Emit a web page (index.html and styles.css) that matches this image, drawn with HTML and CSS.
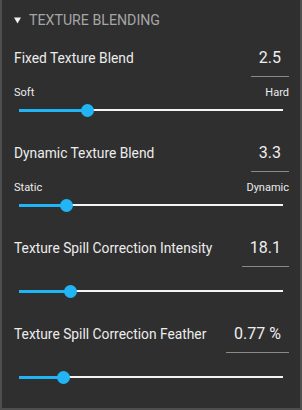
FILE: index.html
```html
<!DOCTYPE html>
<html>
<head>
<meta charset="utf-8">
<link rel="stylesheet" href="styles.css">
</head>
<body>
<div class="panel">
  <div class="header">
    <svg class="caret" width="7" height="7" viewBox="0 0 7 7"><polygon points="0,0.5 7,0.5 3.5,6.5" fill="#f2f2f2"/></svg>
    <span class="title">TEXTURE BLENDING</span>
  </div>

  <div class="section">
    <div class="row">
      <span class="label">Fixed Texture Blend</span>
      <span class="value">2.5</span>
    </div>
    <div class="captions"><span>Soft</span><span>Hard</span></div>
    <div class="slider after-captions"><div class="fill" style="width:26.1%"></div><div class="knob" style="left:26.1%"></div></div>
  </div>

  <div class="section">
    <div class="row">
      <span class="label">Dynamic Texture Blend</span>
      <span class="value">3.3</span>
    </div>
    <div class="captions"><span>Static</span><span>Dynamic</span></div>
    <div class="slider after-captions"><div class="fill" style="width:18%"></div><div class="knob" style="left:18%"></div></div>
  </div>

  <div class="section">
    <div class="row">
      <span class="label">Texture Spill Correction Intensity</span>
      <span class="value">18.1</span>
    </div>
    <div class="slider"><div class="fill" style="width:19.6%"></div><div class="knob" style="left:19.6%"></div></div>
  </div>

  <div class="section">
    <div class="row">
      <span class="label">Texture Spill Correction Feather</span>
      <span class="value">0.77 %</span>
    </div>
    <div class="slider"><div class="fill" style="width:17%"></div><div class="knob" style="left:17%"></div></div>
  </div>
</div>
</body>
</html>
```
FILE: styles.css
```css
html, body {
  margin: 0;
  padding: 0;
  background: #2f2f2f;
}
.panel {
  box-sizing: border-box;
  width: 302px;
  height: 410px;
  background: #2f2f2f;
  border-left: 2px solid #4e4e4e;
  border-right: 2px solid #4e4e4e;
  border-bottom: 2px solid #4e4e4e;
  font-family: Roboto, "Noto Sans", sans-serif;
  color: #ececec;
  padding: 0 11px;
  overflow: hidden;
}
.header {
  display: flex;
  align-items: center;
  padding-top: 9px;
  height: 20px;
  margin-bottom: 17px;
}
.caret {
  margin-left: 1px;
  margin-right: 8px;
  margin-top: 2px;
}
.title {
  font-size: 14.2px;
  line-height: 20px;
  color: #a6a6a6;
  padding-top: 1px;
}
.section + .section {
  margin-top: 21px;
}
.row {
  display: flex;
  justify-content: space-between;
  align-items: flex-end;
}
.label {
  font-size: 13.8px;
  line-height: 24px;
  padding-bottom: 7px;
  padding-left: 1px;
}
.value {
  font-size: 16px;
  line-height: 24px;
  padding: 0 8px 6px 8px;
  border-bottom: 1px solid #8a8a8a;
  color: #eeeeee;
}
.captions {
  display: flex;
  justify-content: space-between;
  font-size: 11px;
  line-height: 13px;
  margin-top: 9px;
  padding-left: 1px;
}
.slider {
  position: relative;
  height: 20px;
  margin: 14px 6px 0 6px;
}
.slider.after-captions {
  margin-top: 1px;
}
.slider::before {
  content: "";
  position: absolute;
  left: 0;
  right: 0;
  top: 9px;
  height: 2px;
  background: #f4f4f4;
}
.fill {
  position: absolute;
  left: 0;
  top: 8.5px;
  height: 3px;
  background: #22b5f5;
}
.knob {
  position: absolute;
  top: 3.5px;
  width: 13px;
  height: 13px;
  margin-left: -6.5px;
  border-radius: 50%;
  background: #22b5f5;
}
```
